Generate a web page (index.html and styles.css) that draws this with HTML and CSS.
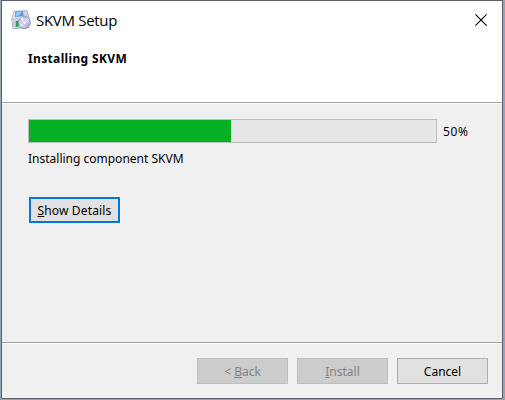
FILE: index.html
```html
<!DOCTYPE html>
<html lang="en">
<head>
<meta charset="utf-8">
<title>SKVM Setup</title>
<link rel="stylesheet" href="styles.css">
</head>
<body>
<main class="window">
  <header class="header">
    <div class="titlebar">
      <svg class="app-icon" width="20" height="20" viewBox="0 0 20 20">
        <defs>
          <linearGradient id="box" x2="1" y2="1"><stop stop-color="#eef1f7"/><stop offset="1" stop-color="#a9b1c4"/></linearGradient>
          <linearGradient id="disc" x2="1" y2="1"><stop stop-color="#9faee8"/><stop offset=".5" stop-color="#dcdcfa"/><stop offset="1" stop-color="#8f8ac8"/></linearGradient>
        </defs>
        <path d="M3 1.2 16 .6 18 7 17.5 18 2 18.5.7 9z" fill="url(#box)" stroke="#a2a9b8" stroke-width=".8"/>
        <path d="M4.2 1.5 12 1 12.5 6 4 7z" fill="#5b9ce0"/>
        <path d="M5.5 2 10.5 1.7 8 5.8 5 6z" fill="#99cbf5"/>
        <path d="M1.5 8.5 8 8v9.8L2.5 18z" fill="#ccd2dc"/>
        <path d="M4.8 11h2.8v5.8H4.8z" fill="#20a83a"/>
        <circle cx="13.4" cy="12.6" r="6" fill="url(#disc)" stroke="#8289ad" stroke-width=".8"/>
        <path d="M13.4 12.6 9 9a6 6 0 0 1 3-2z" fill="#edf5ff" opacity=".85"/>
        <circle cx="13.4" cy="12.6" r="1.7" fill="#fff" stroke="#a9aad0" stroke-width=".6"/>
      </svg>
      <span class="title">SKVM Setup</span>
      <svg class="close" width="12" height="12" viewBox="0 0 12 12"><path d="M.4.4l11.2 11.2M11.6.4.4 11.6" stroke="#000" stroke-width="1.1"/></svg>
    </div>
    <h1 class="heading">Installing SKVM</h1>
  </header>
  <section class="content">
    <div class="progress-row">
      <div class="progress"><div class="bar"></div></div>
      <span class="percent">50%</span>
    </div>
    <p class="status">Installing component SKVM</p>
    <button class="button details"><span><u>S</u>how Details</span></button>
  </section>
  <footer class="footer">
    <button class="button" disabled><span>&lt; <u>B</u>ack</span></button>
    <button class="button install" disabled><span><u>I</u>nstall</span></button>
    <button class="button cancel"><span>Cancel</span></button>
  </footer>
</main>
</body>
</html>
```
FILE: styles.css
```css
* { box-sizing: border-box; }
body {
  margin: 0;
  height: 400px;
  overflow: hidden;
  padding: 0 2px 1px 1px;
  background: #98a4b5;
  font: 12px/16px "Noto Sans", sans-serif;
  color: #000;
}
.window {
  display: flex;
  flex-direction: column;
  height: 399px;
  width: 502px;
  border: 1px solid #5c6068;
  background: #f0f0f0;
}
.header {
  height: 102px;
  background: #fff;
  border-bottom: 1px solid #a0a0a0;
}
.titlebar {
  display: flex;
  align-items: center;
  height: 37px;
  padding: 0 15px 0 9px;
}
.title {
  margin-left: 5px;
  font: 15px/20px "Open Sans", sans-serif;
  letter-spacing: -0.3px;
}
.close { margin-left: auto; }
.heading {
  margin: 13px 0 0 26px;
  font-size: 12px;
  line-height: 16px;
  letter-spacing: 0.35px;
}
.content {
  flex: 1;
  border-top: 1px solid #fff;
  padding: 15px 26px 0;
}
.progress-row { display: flex; align-items: center; }
.progress {
  width: 409px;
  height: 24px;
  border: 1px solid #bcbcbc;
  background: #e6e6e6;
}
.bar { width: 202px; height: 22px; background: #06b025; }
.percent { margin: 2px 0 0 6px; letter-spacing: 0.6px; }
.status { margin: 8px 0 30px; }
.button {
  display: flex;
  align-items: center;
  justify-content: center;
  width: 91px;
  height: 26px;
  padding: 0;
  border: 1px solid #adadad;
  background: #e1e1e1;
  font: inherit;
  color: #000;
}
.button:disabled { background: #ccc; border-color: #bfbfbf; color: #838383; }
.button span { padding-top: 2px; }
.details { margin-left: 1px; border: 2px solid #0078d7; letter-spacing: 0.15px; }
.footer {
  display: flex;
  justify-content: flex-end;
  height: 56px;
  padding: 15px 14px 0 0;
  border-top: 1px solid #a0a0a0;
  box-shadow: inset 0 1px #fff;
}
.install { margin: 0 9px; }
```
